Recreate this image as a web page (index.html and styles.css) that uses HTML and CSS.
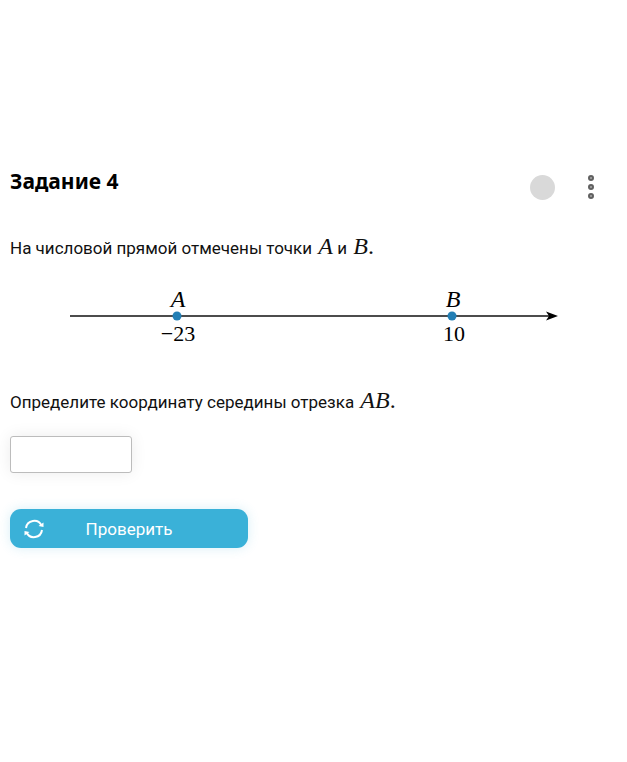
FILE: index.html
```html
<!DOCTYPE html>
<html lang="ru">
<head>
    <meta charset="UTF-8">
    <meta name="viewport" content="width=device-width, initial-scale=1.0">
    <title>Задание 4</title>
    <link rel="stylesheet" href="styles.css">
</head>
<body>
    <main class="task">
        <header class="task-header">
            <h1>Задание 4</h1>
            <div class="task-tools">
                <span class="status"></span>
                <button class="menu-button" type="button" aria-label="Меню">
                    <svg width="8" height="26" viewBox="0 0 8 26">
                        <circle cx="4" cy="4" r="2"/>
                        <circle cx="4" cy="13" r="2"/>
                        <circle cx="4" cy="22" r="2"/>
                    </svg>
                </button>
            </div>
        </header>

        <p>На числовой прямой отмечены точки <i class="math">A</i> и <i class="math">B</i><span class="math">.</span></p>

        <svg class="number-line" viewBox="0 0 607 70" role="img" aria-label="Числовая прямая">
            <path class="axis" d="M60 36H540"/>
            <path d="M548 36L536 31.5L539 36L536 40.5Z"/>
            <circle class="point" cx="167" cy="36" r="4.5"/>
            <circle class="point" cx="442" cy="36" r="4.5"/>
            <text class="name" x="168" y="27">A</text>
            <text class="name" x="443" y="27">B</text>
            <text x="168" y="61">−23</text>
            <text x="444" y="61">10</text>
        </svg>

        <form>
            <label for="answer">Определите координату середины отрезка <i class="math">AB</i><span class="math">.</span></label>
            <input id="answer" type="text" autocomplete="off">
            <button class="check-button" type="submit">
                <svg width="20" height="20" viewBox="0 0 20 20">
                    <path d="M2 9A8.2 8.2 0 0 1 17.5 6.5M18 11A8.2 8.2 0 0 1 2.5 13.5"/>
                    <path class="tip" d="M19.5 3.5V8L14.5 7ZM.5 16.5V12L5.5 13Z"/>
                </svg>
                <span>Проверить</span>
            </button>
        </form>
    </main>
</body>
</html>
```

FILE: styles.css
```css
* {
    box-sizing: border-box;
}

body {
    margin: 0;
    background: #fff;
    color: #111;
    font-family: Roboto, "Liberation Sans", sans-serif;
    font-size: 17px;
    line-height: 28px;
}

.task {
    padding: 166px 10px 40px;
}

.task-header {
    display: flex;
    justify-content: space-between;
    align-items: flex-start;
    margin-bottom: 32px;
}

h1 {
    margin: 0;
    font-family: "Noto Sans", "Open Sans", sans-serif;
    font-size: 21px;
    font-weight: 700;
    line-height: 30px;
    color: #000;
}

.task-tools {
    display: flex;
    align-items: center;
    gap: 32px;
    padding: 8px 22px 0 0;
}

.status {
    width: 25px;
    height: 25px;
    border-radius: 50%;
    background: #d9d9d9;
}

.menu-button {
    display: flex;
    padding: 0;
    border: 0;
    background: none;
    cursor: pointer;
}

.menu-button circle {
    fill: #aaa;
    stroke: #606060;
    stroke-width: 2;
}

p {
    margin: 0 0 18px;
}

.math {
    font-family: "Liberation Serif", serif;
    font-size: 24px;
}

i.math {
    margin-left: 2px;
}

.number-line {
    display: block;
    width: 100%;
    margin-bottom: 36px;
}

.number-line text {
    font-family: "Liberation Serif", serif;
    font-size: 22px;
    text-anchor: middle;
}

.number-line .name {
    font-size: 24px;
    font-style: italic;
}

.axis {
    stroke: #111;
    stroke-width: 1.5;
}

.point {
    fill: #237fb5;
}

label {
    display: block;
    margin-bottom: 20px;
}

input {
    display: block;
    width: 122px;
    height: 37px;
    margin-bottom: 36px;
    padding: 0 10px;
    border: 1px solid #bcbcbc;
    border-radius: 3px;
    font: inherit;
    box-shadow: 0 0 16px rgba(0, 0, 0, 0.08);
}

.check-button {
    display: flex;
    align-items: center;
    width: 238px;
    height: 39px;
    padding: 0 14px;
    border: 0;
    border-radius: 11px;
    background: #3ab1d8;
    color: #fff;
    font: inherit;
    cursor: pointer;
    box-shadow: 0 0 12px rgba(58, 177, 216, 0.2);
}

.check-button span {
    flex: 1;
    padding-right: 20px;
    text-align: center;
}

.check-button path {
    fill: none;
    stroke: #fff;
    stroke-width: 2;
}

.check-button .tip {
    fill: #fff;
    stroke: none;
}
```
